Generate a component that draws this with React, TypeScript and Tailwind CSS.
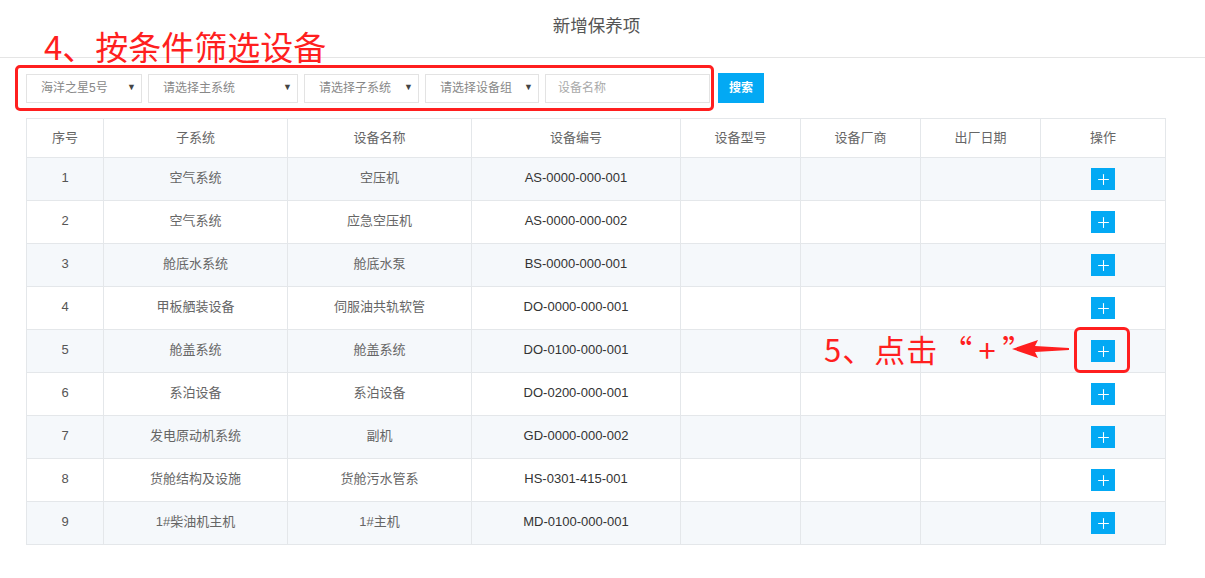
import { Plus } from "lucide-react";

const rows = [
  { no: 1, sub: "空气系统", name: "空压机", code: "AS-0000-000-001" },
  { no: 2, sub: "空气系统", name: "应急空压机", code: "AS-0000-000-002" },
  { no: 3, sub: "舱底水系统", name: "舱底水泵", code: "BS-0000-000-001" },
  { no: 4, sub: "甲板舾装设备", name: "伺服油共轨软管", code: "DO-0000-000-001" },
  { no: 5, sub: "舱盖系统", name: "舱盖系统", code: "DO-0100-000-001" },
  { no: 6, sub: "系泊设备", name: "系泊设备", code: "DO-0200-000-001" },
  { no: 7, sub: "发电原动机系统", name: "副机", code: "GD-0000-000-002" },
  { no: 8, sub: "货舱结构及设施", name: "货舱污水管系", code: "HS-0301-415-001" },
  { no: 9, sub: "1#柴油机主机", name: "1#主机", code: "MD-0100-000-001" },
];

const headers = ["序号", "子系统", "设备名称", "设备编号", "设备型号", "设备厂商", "出厂日期", "操作"];
const widths = ["w-[77px]", "w-[184px]", "w-[184px]", "w-[209px]", "w-[120px]", "w-[120px]", "w-[120px]", "w-[125px]"];

const Select = ({ label, w }: { label: string; w: string }) => (
  <div className={`${w} h-[29px] border border-[#e3e3e3] flex items-center justify-between pl-[14px] pr-[5px] text-[12px] text-[#888]`}>
    <span>{label}</span>
    <span className="text-[9px] text-[#444]">▼</span>
  </div>
);

const App = () => {
  return (
    <div
      className="relative w-[1205px] h-[578px] bg-white overflow-hidden"
      style={{ fontFamily: '"Liberation Sans", "Noto Sans CJK SC", sans-serif' }}
    >
      <div className="h-[58px] border-b border-[#e5e5e5] flex justify-center pt-[13px] pr-[12px]">
        <h1 className="text-[17.5px] leading-[26px] text-[#555]">新增保养项</h1>
      </div>

      <div className="flex items-center mt-[15px] ml-[26px] gap-[6px]">
        <Select label="海洋之星5号" w="w-[116px]" />
        <Select label="请选择主系统" w="w-[150px]" />
        <Select label="请选择子系统" w="w-[115px]" />
        <Select label="请选择设备组" w="w-[114px]" />
        <div className="w-[165px] h-[29px] border border-[#e3e3e3] flex items-center pl-[12px] text-[12px] text-[#aaa]">
          设备名称
        </div>
        <button className="ml-[2px] w-[46px] h-[30px] bg-[#03a9f4] text-white text-[12px] font-bold">搜索</button>
      </div>

      <table className="mt-[15px] ml-[26px] w-[1140px] table-fixed border-collapse text-[13px]">
        <colgroup>
          {widths.map((w, i) => (
            <col key={i} className={w} />
          ))}
        </colgroup>
        <thead>
          <tr className="h-[39px]">
            {headers.map((h) => (
              <th key={h} className="border border-[#e4e7ea] font-normal text-[#666]">
                {h}
              </th>
            ))}
          </tr>
        </thead>
        <tbody>
          {rows.map((r, i) => (
            <tr key={r.no} className={`h-[43px] ${i % 2 === 0 ? "bg-[#f5f8fb]" : "bg-white"}`}>
              <td className="border border-[#e4e7ea] text-center text-[#555] pb-[2px]">{r.no}</td>
              <td className="border border-[#e4e7ea] text-center text-[#666] pb-[2px]">{r.sub}</td>
              <td className="border border-[#e4e7ea] text-center text-[#666] pb-[2px]">{r.name}</td>
              <td className="border border-[#e4e7ea] text-center text-[#333] pb-[2px]">{r.code}</td>
              <td className="border border-[#e4e7ea]" />
              <td className="border border-[#e4e7ea]" />
              <td className="border border-[#e4e7ea]" />
              <td className="border border-[#e4e7ea]">
                <div className="flex justify-center">
                  <span className="w-[24px] h-[22px] bg-[#03a9f4] flex items-center justify-center">
                    <Plus size={17} strokeWidth={1.5} className="text-white" />
                  </span>
                </div>
              </td>
            </tr>
          ))}
        </tbody>
      </table>

      {/* annotations */}
      <div
        className="absolute left-[44px] top-[25px] text-[33px] leading-[42px] text-[#ff1f1f]"
        style={{ fontFamily: '"Noto Sans CJK SC", sans-serif' }}
      >
        4、按条件筛选设备
      </div>
      <div className="absolute left-[15px] top-[65px] w-[699px] h-[46px] border-[3px] border-[#ff1f1f] rounded-[5px]" />

      <div
        className="absolute left-[824px] top-[330px] flex text-[31px] leading-[38px] text-[#ff1f1f]"
        style={{ fontFamily: '"Noto Sans CJK SC", sans-serif' }}
      >
        <span className="tracking-[1px]">5、点击</span>
        <span className="inline-block w-[34px] text-right">“</span>
        <span className="inline-block w-[30px] text-center">+</span>
        <span className="inline-block w-[15px] text-left">”</span>
      </div>
      <svg className="absolute left-[1012px] top-[340px]" width="60" height="18" viewBox="0 0 60 18">
        <polygon points="0,9 26,0 23,6 57,8 57,10 23,12 26,18" fill="#ff1f1f" />
      </svg>
      <div className="absolute left-[1074px] top-[327px] w-[56px] h-[46px] border-[3px] border-[#ff1f1f] rounded-[6px]" />
    </div>
  );
};

export default App;
